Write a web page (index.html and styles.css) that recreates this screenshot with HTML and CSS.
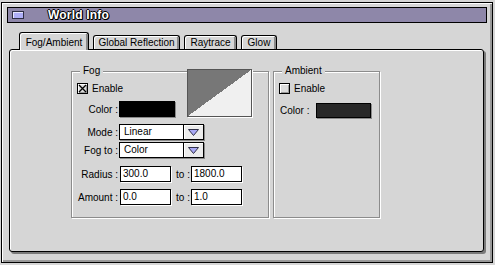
FILE: index.html
```html
<!DOCTYPE html>
<html>
<head>
<meta charset="utf-8">
<title>World Info</title>
<link rel="stylesheet" href="styles.css">
</head>
<body>
<div class="window">
  <div class="titlebar">
    <span class="closebox"></span>
    <span class="title">World Info</span>
  </div>
  <div class="tabs">
    <div class="tab tab-fog active">Fog/Ambient</div>
    <div class="tab tab-global">Global Reflection</div>
    <div class="tab tab-ray">Raytrace</div>
    <div class="tab tab-glow">Glow</div>
  </div>
  <div class="panel">
    <div class="group group-fog">
      <span class="legend">Fog</span>
      <div class="preview"></div>
      <div class="check-row">
        <span class="checkbox">
          <svg width="9" height="9" viewBox="0 0 9 9"><path d="M1 1 L8 8 M8 1 L1 8" stroke="#000" stroke-width="1.3" fill="none"/></svg>
        </span>
        <span class="check-label">Enable</span>
      </div>
      <div class="row row-color">
        <span class="lbl">Color :</span>
        <span class="swatch swatch-black"></span>
      </div>
      <div class="row row-mode">
        <span class="lbl">Mode :</span>
        <div class="popup">
          <span class="popup-text">Linear</span>
          <span class="popup-arrow"><svg width="11" height="7" viewBox="0 0 11 7"><path d="M0.5 0.5 H10.5 L5.5 6.5 Z" fill="#a8a8f4" stroke="#303048" stroke-width="1"/></svg></span>
        </div>
      </div>
      <div class="row row-fogto">
        <span class="lbl">Fog to :</span>
        <div class="popup">
          <span class="popup-text">Color</span>
          <span class="popup-arrow"><svg width="11" height="7" viewBox="0 0 11 7"><path d="M0.5 0.5 H10.5 L5.5 6.5 Z" fill="#a8a8f4" stroke="#303048" stroke-width="1"/></svg></span>
        </div>
      </div>
      <div class="row row-radius">
        <span class="lbl">Radius :</span>
        <span class="field">300.0</span>
        <span class="lbl-to">to :</span>
        <span class="field">1800.0</span>
      </div>
      <div class="row row-amount">
        <span class="lbl">Amount :</span>
        <span class="field">0.0</span>
        <span class="lbl-to">to :</span>
        <span class="field">1.0</span>
      </div>
    </div>
    <div class="group group-ambient">
      <span class="legend">Ambient</span>
      <div class="check-row">
        <span class="checkbox"></span>
        <span class="check-label">Enable</span>
      </div>
      <div class="row row-amb-color">
        <span class="lbl-inline">Color :</span>
        <span class="swatch swatch-dark"></span>
      </div>
    </div>
  </div>
</div>
</body>
</html>
```
FILE: styles.css
```css
* { box-sizing: border-box; }

html, body {
  margin: 0;
  padding: 0;
}

body {
  background: #d6d6d6;
  font-family: "Liberation Sans", Arial, sans-serif;
  font-size: 10px;
  color: #000;
  width: 495px;
  height: 265px;
  overflow: hidden;
}

.window {
  margin: 2px 0 0 1px;
  width: 492px;
  height: 261px;
  border: 1px solid #000;
  background: #d6d6d6;
  box-shadow: inset 1px 1px 0 #fff, inset -2px -2px 0 #999;
  padding: 4px 5px 0 5px;
}

/* ---- title bar ---- */
.titlebar {
  height: 16px;
  border: 1px solid #000;
  background: #8e87a9;
  display: flex;
  align-items: center;
  padding-left: 4px;
}

.closebox {
  width: 12px;
  height: 8px;
  border: 1px solid #2e2e44;
  background: #aeaef6;
  box-shadow: inset 1px 1px 0 #e6e6ff;
}

.title {
  margin-left: 24px;
  font-weight: bold;
  font-size: 12px;
  line-height: 14px;
  color: #fff;
  text-shadow: 1px 0 0 #000, -1px 0 0 #000, 0 1px 0 #000, 0 -1px 0 #000, 1px 1px 0 #000;
  letter-spacing: 0.2px;
}

/* ---- tabs ---- */
.tabs {
  display: flex;
  align-items: flex-end;
  gap: 4px;
  margin: 9px 0 0 2px;
  padding-left: 10px;
  height: 17px;
}

.tab {
  height: 14px;
  border: 1px solid #000;
  border-bottom: none;
  border-radius: 3px 3px 0 0;
  background: #d6d6d6;
  box-shadow: inset 1px 1px 0 #fff, inset -2px 0 0 #8a8a8a;
  text-align: center;
  line-height: 13px;
  white-space: nowrap;
}

.tab.active {
  height: 18px;
  margin-bottom: -1px;
  padding-top: 3px;
  position: relative;
  z-index: 1;
}

.tab-fog { width: 70px; }
.tab-global { width: 87px; }
.tab-ray { width: 53px; }
.tab-glow { width: 36px; }

/* ---- panel ---- */
.panel {
  margin-left: 2px;
  width: 475px;
  height: 203px;
  border: 1px solid #000;
  border-radius: 3px;
  background: #d6d6d6;
  box-shadow: inset 1px 1px 0 #fff, 2px 2px 0 #7a7a7a;
  padding: 21px 0 0 61px;
  display: flex;
  gap: 4px;
  align-items: flex-start;
}

/* ---- group boxes ---- */
.group {
  position: relative;
  height: 147px;
  border: 1px solid #8c8c8c;
  box-shadow: 1px 1px 0 #fff, inset 1px 1px 0 #fff;
  padding: 11px 0 0 5px;
}

.group-fog { width: 198px; }
.group-ambient { width: 107px; }

.legend {
  position: absolute;
  top: -7px;
  left: 8px;
  padding: 0 3px;
  background: #d6d6d6;
  line-height: 12px;
}

.preview {
  position: absolute;
  top: -3px;
  right: 16px;
  width: 65px;
  height: 48px;
  border: 1px solid #555;
  box-shadow: 1px 1px 0 #fff;
  background: linear-gradient(to bottom right, #777 50%, #f0f0f0 50%);
}

.check-row {
  display: flex;
  align-items: center;
  height: 11px;
}

.checkbox {
  width: 11px;
  height: 11px;
  border: 1px solid #000;
  background: #dcdcdc;
  box-shadow: inset 1px 1px 0 #fff, inset -1px -1px 0 #9a9a9a;
  display: flex;
  align-items: center;
  justify-content: center;
}

.check-label {
  margin-left: 4px;
  line-height: 11px;
}

.row {
  display: flex;
  align-items: center;
  height: 16px;
}

.row-color { margin-top: 7px; }
.row-mode { margin-top: 7px; }
.row-fogto { margin-top: 2px; }
.row-radius { margin-top: 8px; }
.row-amount { margin-top: 7px; }
.row-amb-color { margin-top: 8px; }

.lbl {
  width: 41px;
  margin-right: 1px;
  text-align: right;
  white-space: nowrap;
}

.lbl-inline {
  margin: 0 7px 0 1px;
  white-space: nowrap;
}

.lbl-to {
  width: 19px;
  text-align: right;
  white-space: nowrap;
}

.swatch {
  height: 16px;
  border: 1px solid #000;
  box-shadow: 1px 1px 0 #8a8a8a;
}

.swatch-black {
  width: 56px;
  background: #000;
}

.swatch-dark {
  width: 55px;
  height: 15px;
  background: #282828;
}

.popup {
  display: flex;
  width: 85px;
  height: 16px;
  border: 1px solid #000;
  background: #fff;
  box-shadow: 1px 1px 0 #8a8a8a;
}

.popup-text {
  flex: 1;
  padding-left: 4px;
  line-height: 14px;
}

.popup-arrow {
  width: 20px;
  border-left: 1px solid #000;
  background: #ececec;
  box-shadow: inset 1px 1px 0 #fff;
  display: flex;
  align-items: center;
  justify-content: center;
  padding-top: 1px;
}

.field {
  width: 51px;
  height: 16px;
  margin-left: 1px;
  border: 1px solid #000;
  background: #fff;
  padding-left: 2px;
  line-height: 14px;
  box-shadow: 1px 1px 0 #fff;
}
```
